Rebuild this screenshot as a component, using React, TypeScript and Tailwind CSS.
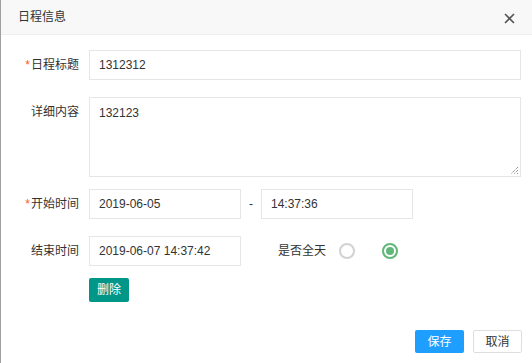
import React from "react";

const font = { fontFamily: '"Liberation Sans", "Noto Sans CJK SC", sans-serif' };

function Label({ text, required }: { text: string; required?: boolean }) {
  return (
    <div className="w-[78px] shrink-0 text-right text-[12px] text-[#333] leading-[30px]">
      {required && <span className="text-[#ff5722] mr-[1px]">*</span>}
      {text}
    </div>
  );
}

function Field({ value, w }: { value: string; w: string }) {
  return (
    <div className={`${w} h-[30px] border border-[#e6e6e6] bg-white px-[9px] text-[12px] text-[#333] leading-[28px]`}>
      {value}
    </div>
  );
}

function Radio({ checked }: { checked?: boolean }) {
  return (
    <span
      className={`w-[16px] h-[16px] rounded-full border-2 flex items-center justify-center ${
        checked ? "border-[#5fb878]" : "border-[#d2d2d2]"
      }`}
    >
      {checked && <span className="w-[8px] h-[8px] rounded-full bg-[#5fb878]" />}
    </span>
  );
}

export default function App() {
  return (
    <div className="w-[532px] h-[363px] bg-white border-l border-[#a0a0a0] flex flex-col" style={font}>
      <div className="h-[35px] shrink-0 bg-[#f8f8f8] border-b border-[#eee] flex items-center justify-between pl-[17px] pr-[17px]">
        <span className="text-[12px] text-[#333]">日程信息</span>
        <svg width="11" height="11" viewBox="0 0 11 11" className="mt-[2px]">
          <path d="M1 1L10 10M10 1L1 10" stroke="#555" strokeWidth="1.6" />
        </svg>
      </div>

      <div className="flex flex-col pt-[15px]">
        <div className="flex items-center gap-[10px]">
          <Label text="日程标题" required />
          <Field value="1312312" w="w-[432px]" />
        </div>

        <div className="flex gap-[10px] mt-[17px]">
          <Label text="详细内容" />
          <div className="relative w-[432px] h-[80px] border border-[#e6e6e6] px-[9px] pt-[6px] text-[12px] text-[#333]">
            132123
            <svg width="9" height="9" viewBox="0 0 9 9" className="absolute right-[1px] bottom-[1px]">
              <path d="M8 1L1 8M8 4L4 8M8 7L7 8" stroke="#666" strokeWidth="1" strokeDasharray="1 1" />
            </svg>
          </div>
        </div>

        <div className="flex items-center mt-[12px]">
          <Label text="开始时间" required />
          <div className="ml-[10px]">
            <Field value="2019-06-05" w="w-[152px]" />
          </div>
          <span className="w-[20px] text-center text-[12px] text-[#333]">-</span>
          <Field value="14:37:36" w="w-[152px]" />
        </div>

        <div className="flex items-center mt-[17px]">
          <Label text="结束时间" />
          <div className="ml-[10px]">
            <Field value="2019-06-07 14:37:42" w="w-[152px]" />
          </div>
          <span className="ml-[37px] text-[12px] text-[#333]">是否全天</span>
          <div className="ml-[13px] flex items-center gap-[27px]">
            <Radio />
            <Radio checked />
          </div>
        </div>

        <div className="pl-[88px] mt-[11px]">
          <button className="w-[40px] h-[24px] bg-[#009688] text-white text-[12px] rounded-[2px]">删除</button>
        </div>
      </div>

      <div className="mt-auto mb-[10px] flex justify-end gap-[9px] pr-[10px]">
        <button className="w-[49px] h-[23px] bg-[#1e9fff] text-white text-[12px] rounded-[2px]">保存</button>
        <button className="w-[49px] h-[23px] bg-white border border-[#dedede] text-[#333] text-[12px] rounded-[2px]">取消</button>
      </div>
    </div>
  );
}
